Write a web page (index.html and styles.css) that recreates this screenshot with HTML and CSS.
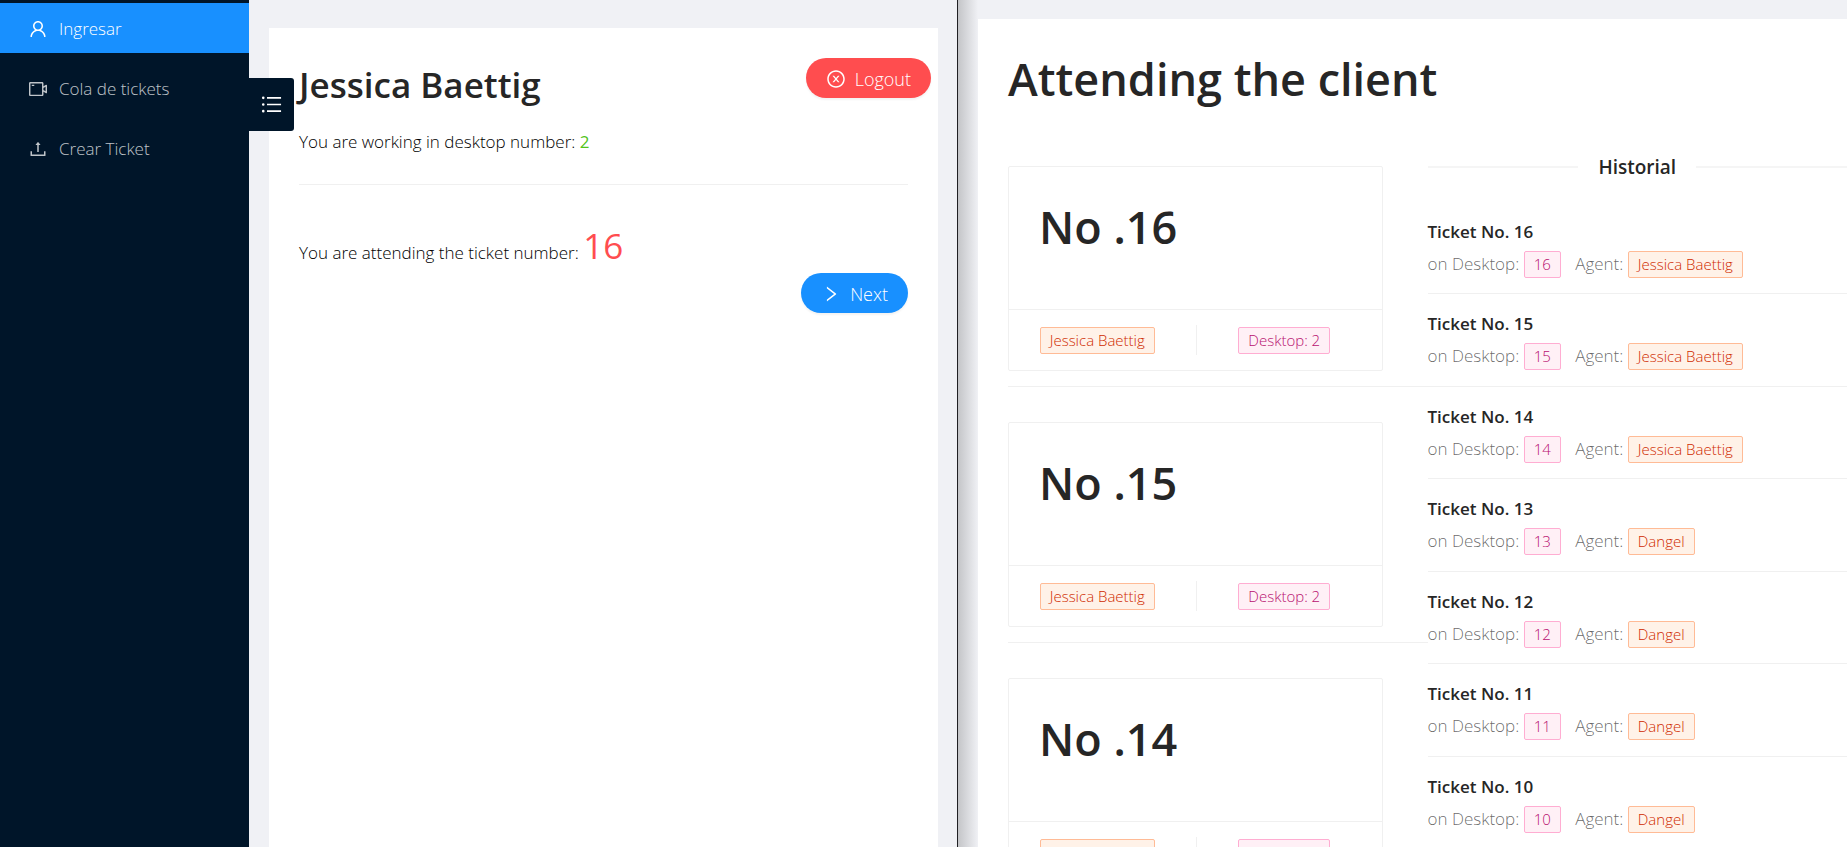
FILE: index.html
```html
<!DOCTYPE html>
<html lang="en">
<head>
<meta charset="utf-8">
<title>Ticket desk</title>
<link rel="stylesheet" href="styles.css">
</head>
<body>
<div class="screen">
  <section class="pane desk-pane">
    <aside class="sidebar">
      <nav class="menu">
        <a class="menu-item active" href="#"><svg class="icon" viewBox="64 64 896 896"><path d="M858.5 763.6a374 374 0 00-80.6-119.5 375.63 375.63 0 00-119.5-80.6c-.4-.2-.8-.3-1.2-.5C719.5 518 760 444.7 760 362c0-137-111-248-248-248S264 225 264 362c0 82.700 40.500 156 102.800 201.100-.4.2-.8.3-1.200.5-44.800 18.900-85 46-119.500 80.600a375.630 375.630 0 00-80.600 119.500A371.700 371.700 0 00136 901.800a8 8 0 008 8.200h60c4.400 0 7.900-3.500 8-7.800 2-77.200 33-149.500 87.800-204.300 56.700-56.700 132-87.900 212.200-87.900s155.500 31.200 212.200 87.900C779 752.700 810 825 812 902.200c.1 4.400 3.600 7.800 8 7.800h60a8 8 0 008-8.200c-1-47.800-10.900-94.300-29.500-138.200zM512 534c-45.900 0-89.100-17.900-121.600-50.400S340 407.900 340 362c0-45.900 17.900-89.100 50.400-121.600S466.100 190 512 190s89.100 17.900 121.600 50.400S684 316.100 684 362c0 45.900-17.900 89.100-50.400 121.600S557.900 534 512 534z"/></svg>Ingresar</a>
        <a class="menu-item" href="#"><svg class="icon" viewBox="64 64 896 896"><path d="M912 302.300L784 376V224c0-35.300-28.700-64-64-64H128c-35.300 0-64 28.700-64 64v576c0 35.300 28.700 64 64 64h592c35.300 0 64-28.700 64-64V648l128 73.700c21.300 12.300 48-3.100 48-27.600V330c0-24.600-26.700-40-48-27.700zM712 792H136V232h576v560zm176-167l-104-59.800V458.900L888 399v226zM208 360h112c4.400 0 8-3.600 8-8v-48c0-4.400-3.600-8-8-8H208c-4.400 0-8 3.600-8 8v48c0 4.400 3.600 8 8 8z"/></svg>Cola de tickets</a>
        <a class="menu-item" href="#"><svg class="icon" viewBox="64 64 896 896"><path d="M400 317.700h73.900V656c0 4.400 3.600 8 8 8h60c4.400 0 8-3.600 8-8V317.700H624c6.700 0 10.400-7.700 6.300-12.900L518.300 163a8 8 0 00-12.600 0l-112 141.700c-4.100 5.300-.4 13 6.300 13zM878 626h-60c-4.400 0-8 3.600-8 8v154H214V634c0-4.400-3.600-8-8-8h-60c-4.400 0-8 3.600-8 8v198c0 17.700 14.300 32 32 32h684c17.700 0 32-14.300 32-32V634c0-4.400-3.600-8-8-8z"/></svg>Crear Ticket</a>
      </nav>
      <button class="toggle" type="button" aria-label="Toggle menu"><svg viewBox="64 64 896 896"><path d="M912 192H328c-4.400 0-8 3.600-8 8v56c0 4.400 3.600 8 8 8h584c4.400 0 8-3.600 8-8v-56c0-4.400-3.600-8-8-8zm0 284H328c-4.400 0-8 3.600-8 8v56c0 4.400 3.600 8 8 8h584c4.400 0 8-3.600 8-8v-56c0-4.400-3.600-8-8-8zm0 284H328c-4.400 0-8 3.600-8 8v56c0 4.400 3.600 8 8 8h584c4.400 0 8-3.600 8-8v-56c0-4.400-3.600-8-8-8zM104 228a56 56 0 10112 0 56 56 0 10-112 0zm0 284a56 56 0 10112 0 56 56 0 10-112 0zm0 284a56 56 0 10112 0 56 56 0 10-112 0z"/></svg></button>
    </aside>
    <main class="desk-card">
      <header class="desk-head">
        <div>
          <h2 class="agent-name">Jessica Baettig</h2>
          <p class="line">You are working in desktop number: <span class="desk-number">2</span></p>
        </div>
        <button class="btn btn-danger" type="button"><svg viewBox="0 0 1024 1024"><path d="M685.400 354.800c0-4.400-3.600-8-8-8l-66 .3L512 465.600l-99.300-118.400-66.100-.3c-4.400 0-8 3.500-8 8 0 1.900.7 3.700 1.900 5.200l130.100 155L340.500 670a8.320 8.320 0 00-1.900 5.200c0 4.400 3.600 8 8 8l66.100-.3L512 564.400l99.300 118.400 66 .3c4.400 0 8-3.500 8-8 0-1.900-.7-3.700-1.900-5.200L553.500 515l130.100-155c1.200-1.400 1.800-3.300 1.800-5.200z"/><path d="M512 65C264.600 65 64 265.600 64 513s200.600 448 448 448 448-200.600 448-448S759.400 65 512 65zm0 820c-205.400 0-372-166.600-372-372s166.600-372 372-372 372 166.600 372 372-166.600 372-372 372z"/></svg>Logout</button>
      </header>
      <hr class="rule">
      <p class="line attending">You are attending the ticket number: <span class="ticket-number">16</span></p>
      <div class="actions">
        <button class="btn btn-primary" type="button"><svg viewBox="0 0 1024 1024"><path d="M765.700 486.800L314.900 134.700A7.970 7.970 0 00302 141v77.300c0 4.900 2.300 9.600 6.100 12.600l360 281.100-360 281.100c-3.900 3-6.100 7.700-6.100 12.600V883c0 6.700 7.700 10.400 12.900 6.300l450.800-352.100a31.960 31.960 0 000-50.400z"/></svg>Next</button>
      </div>
    </main>
  </section>

  <section class="pane queue-pane">
    <main class="queue-card">
      <h1 class="queue-title">Attending the client</h1>
      <div class="queue-grid">
        <div class="current">
          <article class="ticket">
            <h1 class="ticket-title">No .16</h1>
            <footer class="ticket-foot"><div class="cell"><span class="tag volcano">Jessica Baettig</span></div><div class="cell"><span class="tag magenta">Desktop: 2</span></div></footer>
          </article>
          <hr class="ticket-rule">
          <article class="ticket">
            <h1 class="ticket-title">No .15</h1>
            <footer class="ticket-foot"><div class="cell"><span class="tag volcano">Jessica Baettig</span></div><div class="cell"><span class="tag magenta">Desktop: 2</span></div></footer>
          </article>
          <hr class="ticket-rule">
          <article class="ticket">
            <h1 class="ticket-title">No .14</h1>
            <footer class="ticket-foot"><div class="cell"><span class="tag volcano">Jessica Baettig</span></div><div class="cell"><span class="tag magenta">Desktop: 2</span></div></footer>
          </article>
        </div>
        <div class="history">
          <h3 class="history-title">Historial</h3>
          <ul class="history-list">
            <li class="entry"><h4>Ticket No. 16</h4><div class="meta">on Desktop: <span class="tag magenta">16</span> <span class="agent">Agent:</span> <span class="tag volcano">Jessica Baettig</span></div></li>
            <li class="entry"><h4>Ticket No. 15</h4><div class="meta">on Desktop: <span class="tag magenta">15</span> <span class="agent">Agent:</span> <span class="tag volcano">Jessica Baettig</span></div></li>
            <li class="entry"><h4>Ticket No. 14</h4><div class="meta">on Desktop: <span class="tag magenta">14</span> <span class="agent">Agent:</span> <span class="tag volcano">Jessica Baettig</span></div></li>
            <li class="entry"><h4>Ticket No. 13</h4><div class="meta">on Desktop: <span class="tag magenta">13</span> <span class="agent">Agent:</span> <span class="tag volcano">Dangel</span></div></li>
            <li class="entry"><h4>Ticket No. 12</h4><div class="meta">on Desktop: <span class="tag magenta">12</span> <span class="agent">Agent:</span> <span class="tag volcano">Dangel</span></div></li>
            <li class="entry"><h4>Ticket No. 11</h4><div class="meta">on Desktop: <span class="tag magenta">11</span> <span class="agent">Agent:</span> <span class="tag volcano">Dangel</span></div></li>
            <li class="entry"><h4>Ticket No. 10</h4><div class="meta">on Desktop: <span class="tag magenta">10</span> <span class="agent">Agent:</span> <span class="tag volcano">Dangel</span></div></li>
          </ul>
        </div>
      </div>
    </main>
  </section>
</div>
</body>
</html>
```
FILE: styles.css
```css
* { box-sizing: border-box; }

body {
  margin: 0;
  background: #f0f1f5;
  color: #1a1a1a;
  font-family: "Open Sans", "Noto Sans", sans-serif;
  font-size: 17px;
  font-weight: 300;
  line-height: 28px;
}

h1, h2, h3, h4, p, ul { margin: 0; padding: 0; }
h1, h2, h3, h4 { color: #262626; font-weight: 600; }
p { color: #000; }
ul { list-style: none; }
svg { fill: currentColor; flex: none; }

.screen {
  display: grid;
  grid-template-columns: 958fr 889fr;
  height: 100vh;
  overflow: hidden;
}

.pane { display: flex; min-width: 0; min-height: 0; overflow: hidden; }
.desk-pane { border-right: 1px solid #1f1f23; }

/* Sidebar */
.sidebar {
  position: relative;
  flex: none;
  width: 249px;
  padding-top: 3px;
  background: #001529;
}
.menu { display: flex; flex-direction: column; gap: 10px; }
.menu-item {
  display: flex;
  align-items: center;
  gap: 12px;
  height: 50px;
  padding: 2px 29px 0;
  color: rgba(255, 255, 255, .75);
  text-decoration: none;
}
.menu-item.active { background: #1890ff; color: #fff; }
.icon { width: 18px; height: 18px; }
.toggle {
  position: absolute;
  top: 78px;
  left: 100%;
  display: flex;
  align-items: center;
  justify-content: center;
  width: 45px;
  height: 53px;
  padding: 0;
  border: 0;
  border-radius: 0 3px 3px 0;
  background: #001529;
  color: #fff;
}
.toggle svg { width: 21px; height: 21px; }

/* Desk */
.desk-card {
  flex: 1;
  min-width: 0;
  margin: 28px 19px 0 20px;
  padding: 30px;
  background: #fff;
}
.desk-head {
  display: flex;
  justify-content: space-between;
  align-items: flex-start;
  margin-right: -23px;
}
.agent-name { font-size: 35px; line-height: 54px; margin-bottom: 16px; }
.desk-number { color: #52c41a; font-weight: 400; }
.rule { height: 1px; margin: 28px 0; border: 0; background: #f0f0f0; }
.attending { padding-top: 20px; line-height: 40px; }
.ticket-number { color: #ff4d4f; font-size: 35px; font-weight: 400; line-height: 24px; }
.actions { display: flex; justify-content: flex-end; }
.btn {
  display: flex;
  align-items: center;
  gap: 9px;
  height: 40px;
  padding: 2px 20px 0;
  border: 0;
  border-radius: 20px;
  color: #fff;
  font: inherit;
  font-size: 18px;
  box-shadow: 0 2px 2px rgba(0, 0, 0, .05);
}
.btn svg { width: 20px; height: 20px; }
.btn-danger { background: #ff4d4f; }
.btn-primary { background: #1890ff; }

/* Queue */
.queue-pane {
  padding: 19px 0 0 20px;
  background: linear-gradient(90deg, #c4c5c8, #f0f1f5 20px);
}
.queue-card { flex: 1; min-width: 0; padding: 30px 0 0 30px; background: #fff; }
.queue-title { font-size: 45px; line-height: 60px; margin-bottom: 57px; }
.queue-grid { display: grid; grid-template-columns: 1fr 1fr; }

.ticket { width: 375px; border: 1px solid #f0f0f0; border-radius: 2px; }
.ticket-title { height: 142px; padding: 30px; font-size: 45px; line-height: 60px; }
.ticket-foot {
  display: grid;
  grid-template-columns: 1fr 1fr;
  padding: 15px 0;
  border-top: 1px solid #f0f0f0;
}
.cell { display: flex; align-items: center; justify-content: center; height: 30px; padding-right: 10px; }
.cell + .cell { border-left: 1px solid #f0f0f0; }
.ticket-rule { height: 1px; margin: 15px 0 35px; border: 0; background: #f0f0f0; }

.tag {
  display: inline-block;
  padding: 0 9px;
  border: 1px solid;
  border-radius: 2px;
  font-size: 15px;
  line-height: 25px;
}
.volcano { background: #fff2e8; border-color: #ffbb96; color: #cf2a00; }
.magenta { background: #fff0f6; border-color: #ffadd2; color: #b80f70; }

.history-title {
  display: flex;
  align-items: center;
  gap: 20px;
  font-size: 19px;
  line-height: 30px;
  margin: -14px 0 20px;
}
.history-title::before, .history-title::after { content: ""; flex: 1; height: 2px; background: #f5f5f5; }
.entry { padding: 16px 0 15px; border-bottom: 1px solid #f0f0f0; }
.entry h4 { font-size: 17px; line-height: 28px; margin-bottom: 4px; }
.entry:nth-child(even) { padding-bottom: 16px; }
.meta { height: 28px; color: rgba(0, 0, 0, .6); }
.agent { margin-left: 10px; }
```
